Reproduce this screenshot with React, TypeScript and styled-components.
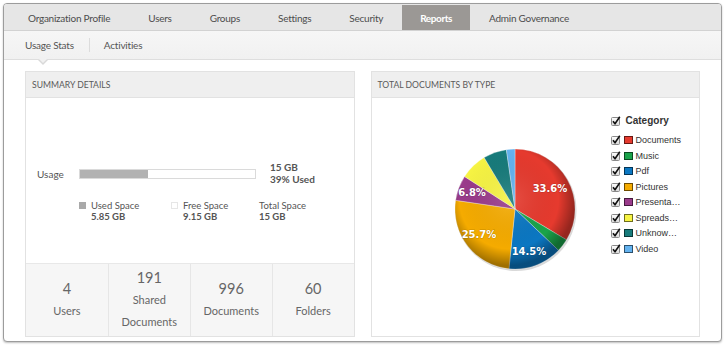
import React from "react";
import styled, { createGlobalStyle } from "styled-components";

const Global = createGlobalStyle`
  html, body { margin: 0; padding: 0; background: #fff; }
  body { font-family: Lato, "Liberation Sans", sans-serif; }
  #root { width: 725px; height: 346px; }
`;

const Frame = styled.div`
  margin: 3px;
  height: 339px;
  box-sizing: border-box;
  border: 1px solid #9c9c9c;
  border-radius: 4px;
  box-shadow: 0 1px 2px rgba(0, 0, 0, 0.25);
  overflow: hidden;
  display: flex;
  flex-direction: column;
  background: #fff;
`;

const TabBar = styled.div`
  height: 27px;
  box-sizing: border-box;
  padding: 1px 0 0 5px;
  background: #e6e6e6;
  border-bottom: 1px solid #d2d2d2;
  display: flex;
  align-items: stretch;
`;

const Tab = styled.div<{ $active?: boolean }>`
  padding: 0 ${(p) => (p.$active ? "18px" : "19px")};
  display: flex;
  align-items: center;
  font-size: 10px;
  letter-spacing: ${(p) => (p.$active ? "-0.4px" : "-0.25px")};
  color: ${(p) => (p.$active ? "#fff" : "#4d4d4d")};
  font-weight: ${(p) => (p.$active ? 700 : 400)};
  background: ${(p) => (p.$active ? "#9b9895" : "transparent")};
`;

const SubNav = styled.div`
  position: relative;
  height: 29px;
  box-sizing: border-box;
  padding-left: 21px;
  background: linear-gradient(#f6f6f6, #f1f1f1);
  border-bottom: 1px solid #dedede;
  display: flex;
  align-items: center;
`;

const SubItem = styled.div`
  font-size: 10px;
  letter-spacing: -0.2px;
  color: #555;
`;

const SubSep = styled.div`
  width: 1px;
  height: 14px;
  background: #dcdcdc;
  margin: 0 14px 0 15px;
`;

const Caret = styled.div`
  position: absolute;
  left: 34px;
  bottom: -6px;
  width: 0;
  height: 0;
  border-left: 5px solid transparent;
  border-right: 5px solid transparent;
  border-top: 5px solid #d9d9d9;
  &::after {
    content: "";
    position: absolute;
    left: -4px;
    top: -6px;
    border-left: 4px solid transparent;
    border-right: 4px solid transparent;
    border-top: 4px solid #f1f1f1;
  }
`;

const Content = styled.div`
  flex: 1;
  display: flex;
  gap: 16px;
  padding: 11px 21px 4px 21px;
  min-height: 0;
`;

const Panel = styled.div`
  flex: 1;
  display: flex;
  flex-direction: column;
  border: 1px solid #e2e2e2;
  min-width: 0;
`;

const PanelHeader = styled.div`
  height: 25px;
  flex: none;
  border-bottom: 1px solid #e2e2e2;
  background: #efefef;
  display: flex;
  align-items: center;
  padding-left: 6px;
  font-size: 8.6px;
  color: #5a5a5a;
  text-transform: uppercase;
`;

const SummaryBody = styled.div`
  flex: 1;
  display: flex;
  flex-direction: column;
  padding: 64px 0 0 11px;
`;

const UsageRow = styled.div`
  display: flex;
  align-items: center;
`;

const UsageLabel = styled.div`
  width: 42px;
  font-size: 10px;
  color: #555;
`;

const Bar = styled.div`
  width: 177px;
  height: 10px;
  box-sizing: border-box;
  border: 1px solid #dadada;
  background: #fff;
  display: flex;
`;

const BarFill = styled.div`
  background: #b2b2b2;
  height: 100%;
`;

const UsageValue = styled.div`
  margin-left: 14px;
  font-size: 10px;
  line-height: 11.5px;
  font-weight: 700;
  color: #555;
`;

const Legend = styled.div`
  display: flex;
  margin: 15px 0 0 42px;
`;

const LegendItem = styled.div<{ $w: number }>`
  width: ${(p) => p.$w}px;
  display: flex;
  align-items: flex-start;
  gap: 5px;
`;

const Swatch = styled.div<{ $filled?: boolean }>`
  width: 7px;
  height: 7px;
  margin-top: 2px;
  box-sizing: border-box;
  background: ${(p) => (p.$filled ? "#a9a9a9" : "#fff")};
  border: 1px solid ${(p) => (p.$filled ? "#a9a9a9" : "#e6e6e6")};
`;

const LegendText = styled.div`
  font-size: 9.5px;
  line-height: 11px;
  color: #555;
`;

const LegendValue = styled.div`
  font-weight: 700;
`;

const Stats = styled.div`
  height: 72px;
  flex: none;
  border-top: 1px solid #e8e8e8;
  background: #f6f6f6;
  display: grid;
  grid-template-columns: repeat(4, 1fr);
`;

const Stat = styled.div`
  display: flex;
  flex-direction: column;
  align-items: center;
  justify-content: center;
  text-align: center;
  color: #666;
  & + & {
    border-left: 1px solid #e6e6e6;
  }
`;

const StatNum = styled.div`
  font-size: 14.5px;
  line-height: 22px;
`;

const StatLabel = styled.div`
  font-size: 11px;
  line-height: 22px;
`;

const ChartBody = styled.div`
  flex: 1;
  display: flex;
  align-items: flex-start;
  padding-top: 12px;
`;

const ChartBox = styled.div`
  margin: 29px 0 0 73px;
  width: 140px;
  height: 140px;
`;

const ChartLegend = styled.div`
  margin-left: 26px;
  display: flex;
  flex-direction: column;
  font-family: "Liberation Sans", Arial, sans-serif;
`;

const LegendRow = styled.div<{ $head?: boolean }>`
  height: ${(p) => (p.$head ? "21px" : "15.5px")};
  display: flex;
  align-items: center;
  font-size: ${(p) => (p.$head ? "10px" : "9px")};
  font-weight: ${(p) => (p.$head ? 700 : 400)};
  color: #333;
  gap: ${(p) => (p.$head ? "5px" : "3px")};
  margin-bottom: ${(p) => (p.$head ? "1.5px" : "0")};
`;

const ColorBox = styled.div<{ $c: string }>`
  width: 9px;
  height: 8px;
  box-sizing: border-box;
  background: ${(p) => p.$c};
  border: 1px solid rgba(0, 0, 0, 0.55);
`;

const Check = () => (
  <svg width="10" height="10" viewBox="0 0 10 10">
    <defs>
      <linearGradient id="cbg" x1="0" y1="0" x2="0" y2="1">
        <stop offset="0" stopColor="#fff" />
        <stop offset="1" stopColor="#d8d8d8" />
      </linearGradient>
    </defs>
    <rect x="0.5" y="1.5" width="8" height="8" rx="1" fill="url(#cbg)" stroke="#8a8a8a" strokeWidth="1" />
    <path d="M2 5.3 L4 7.8 L8.8 0.8" fill="none" stroke="#111" strokeWidth="1.6" strokeLinejoin="round" />
  </svg>
);

const slices = [
  { name: "Documents", pct: 33.6, color: "#e63a2e" },
  { name: "Music", pct: 3.5, color: "#1aa34a" },
  { name: "Pdf", pct: 14.5, color: "#0b77c2" },
  { name: "Pictures", pct: 25.7, color: "#f5ab00" },
  { name: "Presenta…", pct: 6.8, color: "#9a3b8b" },
  { name: "Spreads…", pct: 7.3, color: "#f7f443" },
  { name: "Unknow…", pct: 6.3, color: "#177b7b" },
  { name: "Video", pct: 2.3, color: "#63b2ef" },
];

const labels = [
  { t: "33.6%", x: 105, y: 49 },
  { t: "14.5%", x: 84, y: 112 },
  { t: "25.7%", x: 34, y: 95 },
  { t: "6.8%", x: 27, y: 53 },
];

const Pie = () => {
  const cx = 70;
  const cy = 70;
  const r = 60;
  let acc = 0;
  const paths = slices.map((s) => {
    const a0 = (acc / 100) * Math.PI * 2 - Math.PI / 2;
    acc += s.pct;
    const a1 = (acc / 100) * Math.PI * 2 - Math.PI / 2;
    const x0 = cx + r * Math.cos(a0);
    const y0 = cy + r * Math.sin(a0);
    const x1 = cx + r * Math.cos(a1);
    const y1 = cy + r * Math.sin(a1);
    const large = s.pct > 50 ? 1 : 0;
    return (
      <path
        key={s.name}
        d={`M${cx} ${cy} L${x0} ${y0} A${r} ${r} 0 ${large} 1 ${x1} ${y1} Z`}
        fill={s.color}
        stroke="rgba(255,255,255,0.55)"
        strokeWidth="0.6"
      />
    );
  });
  return (
    <svg width="140" height="140" viewBox="0 0 140 140">
      <defs>
        <radialGradient id="shade" cx="45%" cy="42%" r="55%">
          <stop offset="0" stopColor="#fff" stopOpacity="0.12" />
          <stop offset="0.75" stopColor="#000" stopOpacity="0" />
          <stop offset="1" stopColor="#000" stopOpacity="0.35" />
        </radialGradient>
      </defs>
      <circle cx={cx + 1} cy={cy + 1.5} r={r + 0.5} fill="rgba(0,0,0,0.15)" />
      {paths}
      <circle cx={cx} cy={cy} r={r} fill="url(#shade)" />
      {labels.map((l) => (
        <text
          key={l.t}
          x={l.x}
          y={l.y}
          textAnchor="middle"
          dominantBaseline="central"
          fontFamily="'DejaVu Sans', sans-serif"
          fontSize="10"
          fontWeight="700"
          fill="#fff"
          stroke="rgba(0,0,0,0.2)"
          strokeWidth="1"
          paintOrder="stroke"
        >
          {l.t}
        </text>
      ))}
    </svg>
  );
};

const tabs = ["Organization Profile", "Users", "Groups", "Settings", "Security", "Reports", "Admin Governance"];

export default function App() {
  return (
    <>
      <Global />
      <Frame>
        <TabBar>
          {tabs.map((t) => (
            <Tab key={t} $active={t === "Reports"}>
              {t}
            </Tab>
          ))}
        </TabBar>
        <SubNav>
          <SubItem>Usage Stats</SubItem>
          <SubSep />
          <SubItem>Activities</SubItem>
          <Caret />
        </SubNav>
        <Content>
          <Panel>
            <PanelHeader>Summary Details</PanelHeader>
            <SummaryBody>
              <UsageRow>
                <UsageLabel>Usage</UsageLabel>
                <Bar>
                  <BarFill style={{ width: "39%" }} />
                </Bar>
                <UsageValue>
                  <div>15 GB</div>
                  <div>39% Used</div>
                </UsageValue>
              </UsageRow>
              <Legend>
                <LegendItem $w={92}>
                  <Swatch $filled />
                  <LegendText>
                    <div>Used Space</div>
                    <LegendValue>5.85 GB</LegendValue>
                  </LegendText>
                </LegendItem>
                <LegendItem $w={88}>
                  <Swatch />
                  <LegendText>
                    <div>Free Space</div>
                    <LegendValue>9.15 GB</LegendValue>
                  </LegendText>
                </LegendItem>
                <LegendItem $w={80}>
                  <LegendText>
                    <div>Total Space</div>
                    <LegendValue>15 GB</LegendValue>
                  </LegendText>
                </LegendItem>
              </Legend>
            </SummaryBody>
            <Stats>
              <Stat>
                <StatNum>4</StatNum>
                <StatLabel>Users</StatLabel>
              </Stat>
              <Stat>
                <StatNum>191</StatNum>
                <StatLabel>
                  Shared
                  <br />
                  Documents
                </StatLabel>
              </Stat>
              <Stat>
                <StatNum>996</StatNum>
                <StatLabel>Documents</StatLabel>
              </Stat>
              <Stat>
                <StatNum>60</StatNum>
                <StatLabel>Folders</StatLabel>
              </Stat>
            </Stats>
          </Panel>
          <Panel>
            <PanelHeader>Total Documents by Type</PanelHeader>
            <ChartBody>
              <ChartBox>
                <Pie />
              </ChartBox>
              <ChartLegend>
                <LegendRow $head>
                  <Check />
                  Category
                </LegendRow>
                {slices.map((s) => (
                  <LegendRow key={s.name}>
                    <Check />
                    <ColorBox $c={s.color} />
                    {s.name}
                  </LegendRow>
                ))}
              </ChartLegend>
            </ChartBody>
          </Panel>
        </Content>
      </Frame>
    </>
  );
}
